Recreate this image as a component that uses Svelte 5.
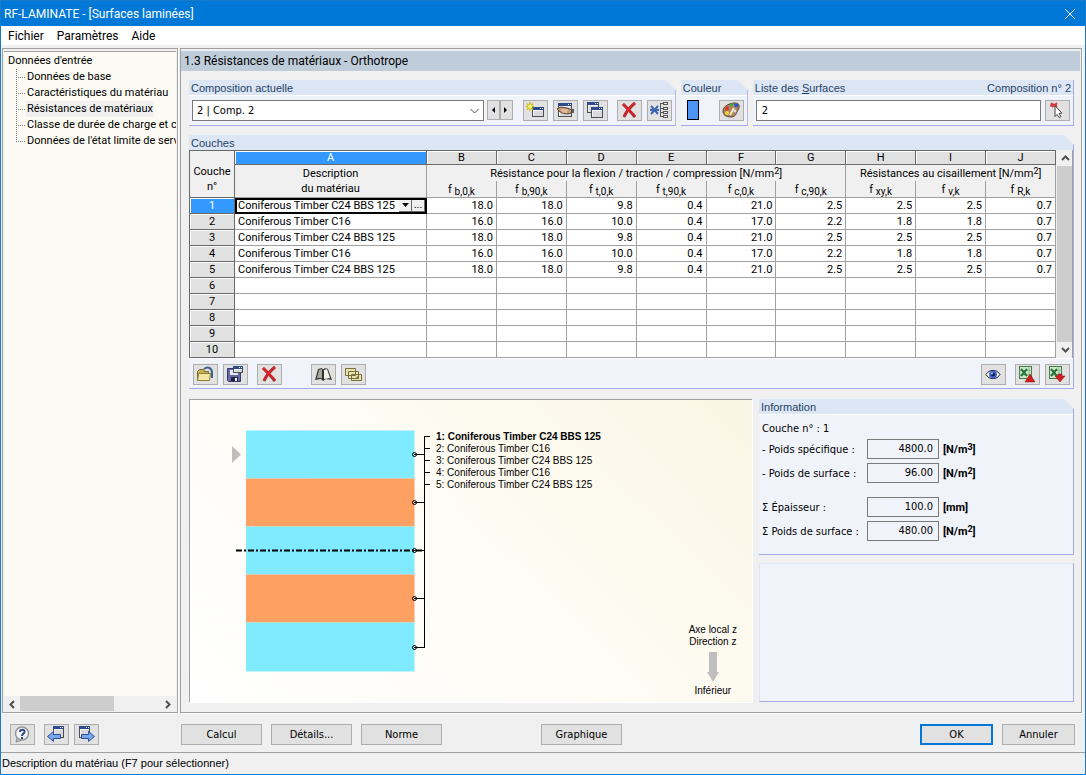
<script>
  const tree = [
    "Données de base",
    "Caractéristiques du matériau",
    "Résistances de matériaux",
    "Classe de durée de charge et c",
    "Données de l'état limite de serv",
  ];
  let current = $state(2);

  const letters = ["A", "B", "C", "D", "E", "F", "G", "H", "I", "J"];
  const symbols = ["b,0,k", "b,90,k", "t,0,k", "t,90,k", "c,0,k", "c,90,k", "xy,k", "v,k", "R,k"];

  const c24 = ["18.0", "18.0", "9.8", "0.4", "21.0", "2.5", "2.5", "2.5", "0.7"];
  const c16 = ["16.0", "16.0", "10.0", "0.4", "17.0", "2.2", "1.8", "1.8", "0.7"];
  const layers = [
    { name: "Coniferous Timber C24 BBS 125", values: c24, color: "#80eaff" },
    { name: "Coniferous Timber C16", values: c16, color: "#ffa063" },
    { name: "Coniferous Timber C24 BBS 125", values: c24, color: "#80eaff" },
    { name: "Coniferous Timber C16", values: c16, color: "#ffa063" },
    { name: "Coniferous Timber C24 BBS 125", values: c24, color: "#80eaff" },
  ];
  const rows = Array.from({ length: 10 }, (_, i) => layers[i]);

  const info = [
    { id: "density", label: "- Poids spécifique :", value: "4800.0", unit: "N/m", power: "3" },
    { id: "weight", label: "- Poids de surface :", value: "96.00", unit: "N/m", power: "2" },
    { id: "thickness", label: "Σ Épaisseur :", value: "100.0", unit: "mm", gap: true },
    { id: "total", label: "Σ Poids de surface :", value: "480.00", unit: "N/m", power: "2" },
  ];
</script>

{#snippet cross()}
  <path d="M3 2c2 2 8 8 12 13M15 1C10 5 6 10 4 15" fill="none" stroke="#8d2f32" stroke-width="3" />
  <path d="M3 2c2 2 8 8 12 12M15 1C10 5 6 10 4 14" fill="none" stroke="#e02028" stroke-width="2" />
{/snippet}

{#snippet win(x, y, w, h)}
  <rect x={x + 0.5} y={y + 0.5} width={w} height={h} fill="#d9d9dc" stroke="#4b4e55" />
  <path d="M{x + 1.5} {y + h - 0.5}v{4 - h}h{w - 2}" fill="none" stroke="#f4f4f4" />
  <rect {x} {y} width={w + 1} height="3" fill="#2c4a8c" />
  <path d="M{x + w - 3} {y + 1.5}h1m1 0h1" stroke="#fff" />
{/snippet}

{#snippet sheet()}
  <rect x="1.5" y="0.5" width="12" height="12" fill="#d3e6cf" stroke="#3f7a48" />
  <path d="M1.5 4.5h12M1.5 9h12M11 .5v12" stroke="#8dbb8f" fill="none" />
  <path d="M3 3l6 7M9 3l-6 7" stroke="#237538" stroke-width="2" />
{/snippet}

{#snippet tool(name, label)}
  <button class="tool" aria-label={label} title={label}>
    <svg width="19" height="17" viewBox="0 0 19 17" aria-hidden="true">
      {#if name === "new"}
        {@render win(6, 5, 11, 9)}
        <path d="M4 0v9M0 4.5h8M1 1.5l6 6M7 1.5l-6 6" stroke="#c9b900" stroke-width="1.3" />
        <circle cx="4" cy="4.5" r="2" fill="#fffb8a" />
      {:else if name === "edit"}
        {@render win(2, 1, 13, 13)}
        <path d="M1 7l4-2 6 1 5 2v3l-5 1-5-1-3-2z" fill="#c79a77" stroke="#5c4335" />
        <path d="M5 8h7M6 10h5" stroke="#f1d3b8" />
        <path d="M15 7h3v4h-3z" fill="#555" />
      {:else if name === "copy"}
        {@render win(1, 0, 11, 10)}
        {@render win(5, 5, 11, 10)}
      {:else if name === "delete"}
        {@render cross()}
      {:else if name === "clean"}
        <path d="M1 4l7 8M8 4l-7 8M0 8h9" stroke="#3b67b5" stroke-width="2" />
        <path d="M10.5 1v14M10 1.5h3M10 6.5h3M10 10.5h3M10 14.5h3" stroke="#555" fill="none" />
        <path d="M13 1.5h5M13 6.5h5M13 10.5h5M13 14.5h5" stroke="#555" stroke-width="3" />
        <path d="M14 1.5h3M14 6.5h3M14 10.5h3M14 14.5h3" stroke="#eee" />
      {:else if name === "palette"}
        <path d="M1 9C1 4 8 1 13 1s5 4 3 7-2 7-7 7-8-2-8-6z" fill="#a98561" stroke="#5a4331" />
        <path d="M3 6l3-2 1 3-3 2z" fill="#e52a21" />
        <path d="M8 2l3-1v3H8z" fill="#34af3c" />
        <path d="M12 2h4v3h-3z" fill="#2653d8" />
        <circle cx="5" cy="11" r="2" fill="#f2d42f" />
        <path d="M12 6l-4 7" stroke="#f4e8c6" stroke-width="2" />
        <circle cx="13" cy="9" r="1.5" fill="#e0e0e0" />
      {:else if name === "pick"}
        <path d="M3 1l6 4M9 1L4 5M2 3.5h7" stroke="#d63b3b" stroke-width="2" />
        <path d="M7 4l7 7-3 .5 2 3-2 1-2-3-2 2z" fill="#fff" stroke="#444" />
      {:else if name === "open"}
        <path d="M8 3c4-3 8-1 8 4v5" fill="none" stroke="#3e618e" stroke-width="2" />
        <path d="M1.5 14.5V5.5l2-2h4l1 2h4v9z" fill="#c7b253" stroke="#786a2a" />
        <path d="M1.5 14.5l1-7h12l-1 7z" fill="#f2e6a2" stroke="#8b7c36" />
      {:else if name === "save"}
        <path d="M1.5 2.5h13v13h-12l-1-1z" fill="#6469a6" stroke="#34386e" />
        <path d="M4 4h8v5H4z" fill="#e8e8f4" />
        <path d="M5 11h7v4H5z" fill="#20243e" />
        <path d="M9 12h2v3H9z" fill="#fff" />
        {@render win(7, 0, 9, 6)}
      {:else if name === "library"}
        <path d="M1 14L4 3l4-1 1 2 2-2 3 1 4 11-6-1-3 2-2-2z" fill="#3c3c3c" />
        <path d="M3 12l2-8 3-1 0 9z" fill="#a8a8a0" />
        <path d="M10 13V4l3-1 3 9z" fill="#f5f5ec" />
        <path d="M9 3v11" stroke="#222" />
      {:else if name === "layers"}
        <path d="M1.5 2.5h10v7h-10zM4.5 5.5h10v7h-10zM7.5 8.5h10v6h-10z" fill="#ece2ad" stroke="#77703f" />
        <path d="M12 12l1.5-2 1.5 2z" fill="#77703f" />
      {:else if name === "eye"}
        <path d="M2 8.5C5 3 13 3 16 8.5 13 14 5 14 2 8.5z" fill="#fff" stroke="#222" />
        <circle cx="9" cy="8.5" r="4" fill="#4069d0" />
        <circle cx="9" cy="8.5" r="2" fill="#111d55" />
        <circle cx="8" cy="7.5" r="1" fill="#bcd0ff" />
      {:else if name === "export"}
        {@render sheet()}
        <path d="M7 16l5-8 5 8z" fill="#d31e20" stroke="#7c1517" stroke-width=".5" />
      {:else if name === "import"}
        {@render sheet()}
        <path d="M7 10h3V8h4v2h3l-5 6z" fill="#d31e20" stroke="#7c1517" stroke-width=".5" />
      {:else if name === "help"}
        <path d="M4 12l-1 4 6-2" fill="#ccc" stroke="#888" />
        <circle cx="9" cy="7.5" r="6.5" fill="#f4f4f4" stroke="#999" stroke-width="1.5" />
        <path d="M7 6c0-3 5-3 4.5 0C11 8 9 7.5 9 10M9 11v2" fill="none" stroke="#2d4a86" stroke-width="2" />
      {:else if name === "previous"}
        {@render win(6, 0, 10, 11)}
        <path d="M.5 10.5l6-5v3h7v4h-7v3z" fill="#7ba5ea" stroke="#2c519c" />
      {:else if name === "next"}
        {@render win(2, 0, 10, 11)}
        <path d="M17.5 10.5l-6-5v3h-7v4h7v3z" fill="#7ba5ea" stroke="#2c519c" />
      {/if}
    </svg>
  </button>
{/snippet}

<div class="window">
  <header class="title">
    <h1>RF-LAMINATE - [Surfaces laminées]</h1>
    <button class="close" aria-label="Fermer">
      <svg width="10" height="10" viewBox="0 0 10 10"><path d="M0 0l10 10M10 0L0 10" stroke="#fff" /></svg>
    </button>
  </header>

  <nav class="menu">
    <button>Fichier</button>
    <button>Paramètres</button>
    <button>Aide</button>
  </nav>

  <div class="body">
    <aside>
      <div class="tree">
        <div class="root">Données d'entrée</div>
        <ul>
          {#each tree as item, i}
            <li>
              <svg width="11" height="16" viewBox="0 0 11 16" aria-hidden="true">
                <path d="M1.5 0v{i === tree.length - 1 ? 8 : 16}M1 8.5h9" stroke="#777" stroke-dasharray="1 1" />
              </svg>
              <button class:current={i === current} onclick={() => (current = i)}>{item}</button>
            </li>
          {/each}
        </ul>
      </div>
      <div class="hscroll">
        <button aria-label="Défiler à gauche">
          <svg width="6" height="9" viewBox="0 0 6 9"><path d="M5 1L1.5 4.5 5 8" /></svg>
        </button>
        <div class="track"><div class="thumb"></div></div>
        <button aria-label="Défiler à droite">
          <svg width="6" height="9" viewBox="0 0 6 9"><path d="M1 1l3.5 3.5L1 8" /></svg>
        </button>
      </div>
    </aside>

    <main>
      <h2>1.3 Résistances de matériaux - Orthotrope</h2>

      <div class="content">
        <div class="top">
          <section class="group cut composition">
            <h3><label for="composition">Composition actuelle</label></h3>
            <div class="bar">
              <div class="combo">
                <select id="composition">
                  <option>2 | Comp. 2</option>
                </select>
              </div>
              <div class="spin">
                <button aria-label="Précédent"><svg width="4" height="6"><path d="M4 0v6L1 3z" /></svg></button>
                <button aria-label="Suivant"><svg width="4" height="6"><path d="M0 0v6l3-3z" /></svg></button>
              </div>
              <div class="tools">
                {@render tool("new", "Nouvelle composition")}
                {@render tool("edit", "Renommer")}
                {@render tool("copy", "Copier")}
              </div>
              <div class="tools">
                {@render tool("delete", "Supprimer")}
                {@render tool("clean", "Supprimer les inutilisées")}
              </div>
            </div>
          </section>

          <section class="group cut color">
            <h3>Couleur</h3>
            <div class="bar spread">
              <span class="swatch"></span>
              {@render tool("palette", "Modifier la couleur")}
            </div>
          </section>

          <section class="group surfaces">
            <h3>
              <label for="surfaces">Liste des <u>S</u>urfaces</label>
              <span>Composition n° 2</span>
            </h3>
            <div class="bar">
              <input id="surfaces" value="2" />
              {@render tool("pick", "Sélectionner")}
            </div>
          </section>
        </div>

        <section class="group cut">
          <h3>Couches</h3>
          <div class="grid">
            <table>
              <colgroup>
                <col class="number" />
                <col class="name" />
                {#each symbols as symbol}
                  <col />
                {/each}
              </colgroup>
              <thead>
                <tr>
                  <th rowspan="3" class="corner">Couche<br />n°</th>
                  {#each letters as letter, i}
                    <th class="letter" class:active={i === 0}>{letter}</th>
                  {/each}
                </tr>
                <tr>
                  <th rowspan="2" class="description">Description<br />du matériau</th>
                  <th colspan="6" class="span">Résistance pour la flexion / traction / compression [N/mm<sup>2</sup>]</th>
                  <th colspan="3" class="span">Résistances au cisaillement [N/mm<sup>2</sup>]</th>
                </tr>
                <tr>
                  {#each symbols as symbol}
                    <th class="symbol">f <sub>{symbol}</sub></th>
                  {/each}
                </tr>
              </thead>
              <tbody>
                {#each rows as row, i}
                  <tr>
                    <th class="letter" class:active={i === 0}>{i + 1}</th>
                    {#if i === 0}
                      <td class="focus">
                        <div>
                          <span>{row.name}</span>
                          <button aria-label="Liste"><svg width="7" height="4"><path d="M0 0h7L3.5 4z" /></svg></button>
                          <button aria-label="Bibliothèque">...</button>
                        </div>
                      </td>
                    {:else}
                      <td>{row?.name ?? ""}</td>
                    {/if}
                    {#each symbols as symbol, j}
                      <td class="num">{row?.values[j] ?? ""}</td>
                    {/each}
                  </tr>
                {/each}
              </tbody>
            </table>
            <div class="vscroll">
              <button aria-label="Défiler vers le haut">
                <svg width="9" height="6" viewBox="0 0 9 6"><path d="M1 5l3.5-3.5L8 5" /></svg>
              </button>
              <div class="track"></div>
              <button aria-label="Défiler vers le bas">
                <svg width="9" height="6" viewBox="0 0 9 6"><path d="M1 1l3.5 3.5L8 1" /></svg>
              </button>
            </div>
          </div>
          <div class="bar table-bar">
            <div class="tools">
              {@render tool("open", "Ouvrir")}
              {@render tool("save", "Enregistrer")}
            </div>
            <div class="tools">{@render tool("delete", "Tout supprimer")}</div>
            <div class="tools wide">
              {@render tool("library", "Bibliothèque de matériaux")}
              {@render tool("layers", "Bibliothèque de couches")}
            </div>
            <div class="tools end">{@render tool("eye", "Afficher")}</div>
            <div class="tools">
              {@render tool("export", "Exporter")}
              {@render tool("import", "Importer")}
            </div>
          </div>
        </section>

        <div class="bottom">
          <div class="graphic">
            <svg class="stack" width="440" height="280" viewBox="0 0 440 280">
              {#each layers as layer, i}
                <rect x="56" y={30.5 + i * 48} width="168.5" height={i === 4 ? 49 : 48} fill={layer.color} />
              {/each}
              <path d="M42 46v17l9-8.5z" fill="#bfbfbf" />
              <path d="M46 150.5h188" stroke="#000" stroke-width="2" stroke-dasharray="6 2 2 2" />
              <g fill="none" stroke="#000">
                <path d="M234.5 36v212" />
                {#each layers as layer, i}
                  {@const y = 54.5 + i * 48 + (i === 4 ? 1 : 0)}
                  <circle cx="224.5" cy={y} r="2" />
                  <path d="M224 {y}h10M234 {36.5 + i * 12}h6" />
                {/each}
              </g>
              {#each layers as layer, i}
                <text x="246" y={40 + i * 12} class:strong={i === 0}>{i + 1}: {layer.name}</text>
              {/each}
            </svg>
            <div class="axis">
              <span>Axe local z</span>
              <span>Direction z</span>
              <svg width="12" height="30" viewBox="0 0 12 30"><path d="M2 0h8v20h2l-6 10-6-10h2z" fill="#bfbfbf" /></svg>
              <span>Inférieur</span>
            </div>
          </div>

          <div class="side">
            <section class="group cut">
              <h3>Information</h3>
              <div class="info">
                <p>Couche n° : 1</p>
                {#each info as field}
                  <div class="field" class:gap={field.gap}>
                    <label for={field.id}>{field.label}</label>
                    <input id={field.id} value={field.value} readonly />
                    <b>[{field.unit}{#if field.power}<sup>{field.power}</sup>{/if}]</b>
                  </div>
                {/each}
              </div>
            </section>
            <div class="group blank"></div>
          </div>
        </div>
      </div>
    </main>
  </div>

  <footer>
    <div class="nav">
      {@render tool("help", "Aide")}
      <div class="tools">
        {@render tool("previous", "Précédent")}
        {@render tool("next", "Suivant")}
      </div>
    </div>
    <div class="actions">
      <button class="push">Calcul</button>
      <button class="push">Détails...</button>
      <button class="push">Norme</button>
      <button class="push graph">Graphique</button>
    </div>
    <div class="confirm">
      <button class="push default">OK</button>
      <button class="push">Annuler</button>
    </div>
  </footer>

  <div class="status">Description du matériau (F7 pour sélectionner)</div>
</div>

<style>
  :global(body) {
    margin: 0;
  }

  .window {
    --ui: "DejaVu Sans Condensed", "Noto Sans", sans-serif;
    --grid: Roboto, "Liberation Sans", sans-serif;
    --small: "Liberation Sans", Arial, sans-serif;
    --line: #a0a0a0;
    display: flex;
    flex-direction: column;
    box-sizing: border-box;
    min-height: 100vh;
    border: 1px solid #1979ca;
    background: #f0f0f0;
    color: #000;
    font: 11px/16px var(--ui);
  }

  .window * {
    box-sizing: border-box;
  }

  h1,
  h2,
  h3,
  p,
  ul {
    margin: 0;
    padding: 0;
    font-weight: normal;
  }

  button,
  input,
  select {
    margin: 0;
    padding: 0;
    border: 0;
    border-radius: 0;
    background: none;
    color: inherit;
    font: inherit;
  }

  svg {
    display: block;
    flex: none;
  }

  .title {
    display: flex;
    align-items: center;
    justify-content: space-between;
    height: 25px;
    padding: 0 10px 0 3px;
    background: #0078d7;
    color: #fff;
  }

  h1,
  .menu {
    font: 12px/18px var(--grid);
  }

  .menu {
    display: flex;
    gap: 13px;
    height: 19px;
    padding: 0 7px;
    background: #fff;
  }

  .body {
    display: flex;
    flex: 1;
    gap: 2px;
    padding: 3px 3px 0 1px;
  }

  aside,
  main {
    border: 1px solid var(--line);
    box-shadow: 1px 1px #fff;
  }

  aside {
    display: flex;
    flex-direction: column;
    width: 176px;
    padding: 2px 1px 1px;
    overflow: hidden;
  }

  .tree {
    flex: 1;
    padding: 1px 0 0 4px;
    border-top: 1px solid var(--line);
    background: #fcfbf3;
    font-family: var(--grid);
    white-space: nowrap;
    overflow: hidden;
  }

  ul {
    padding-left: 7px;
    list-style: none;
  }

  li {
    display: flex;
  }

  li button {
    padding: 0 1px;
  }

  li .current {
    background: #f0f0f0;
  }

  .hscroll {
    display: flex;
    height: 15px;
  }

  .hscroll button,
  .vscroll button {
    display: grid;
    place-items: center;
    width: 16px;
    height: 16px;
  }

  .hscroll path,
  .vscroll path {
    fill: none;
    stroke: #505050;
    stroke-width: 2;
  }

  .track {
    flex: 1;
  }

  .thumb {
    width: 67%;
    height: 15px;
    background: #cdcdcd;
  }

  main {
    display: flex;
    flex: 1;
    flex-direction: column;
    min-width: 0;
    padding: 2px 1px 1px 0;
  }

  h2 {
    height: 20px;
    padding: 0 3px;
    background: #bfcddb;
    font: 12px/20px var(--grid);
  }

  .content {
    display: flex;
    flex: 1;
    flex-direction: column;
    gap: 9px;
    padding: 9px 6px 9px 8px;
  }

  .top,
  .bottom {
    display: flex;
  }

  .top {
    gap: 5px;
  }

  .bottom {
    flex: 1;
    gap: 7px;
    padding-top: 1px;
  }

  .group {
    border: solid #a9a9e6;
    border-width: 0 1px 1px 0;
    background: #f0f3fa;
  }

  .cut {
    clip-path: polygon(0 0, calc(100% - 10px) 0, 100% 10px, 100% 100%, 0 100%);
  }

  h3 {
    display: flex;
    justify-content: space-between;
    height: 15px;
    padding: 0 2px;
    background: #dce6f4;
    color: #1f4367;
    font: 11px/16px var(--small);
  }

  .composition {
    flex: 487;
  }

  .color {
    width: 67px;
  }

  .surfaces {
    flex: 321;
  }

  .bar {
    display: flex;
    height: 30px;
    padding: 4px 3px;
    border-top: 1px solid #fff;
  }

  .spread {
    justify-content: space-between;
    padding-left: 6px;
  }

  .combo {
    display: grid;
    flex: 1;
    height: 21px;
  }

  select,
  .bar input {
    height: 21px;
    padding: 0 4px;
    border: 1px solid #7a7a7a;
    background: #fff;
  }

  select {
    appearance: none;
    background: #fff url("data:image/svg+xml,%3Csvg xmlns='http://www.w3.org/2000/svg' width='9' height='6'%3E%3Cpath d='M.5 1l4 4 4-4' fill='none' stroke='%23555'/%3E%3C/svg%3E") no-repeat right 4px center;
  }

  .bar input {
    flex: 1;
    min-width: 0;
    padding-left: 5px;
    margin-right: 4px;
  }

  .spin {
    display: flex;
    margin: 0 10px 0 3px;
  }

  .spin button,
  .tool {
    display: grid;
    place-items: center;
    border: 1px solid #adadad;
    background: #e1e1e1;
  }

  .spin button {
    width: 13px;
    height: 20px;
  }

  .tools {
    display: flex;
    gap: 5px;
  }

  .tools + .tools {
    margin-left: 9px;
  }

  .tool {
    width: 25px;
    height: 21px;
  }

  .swatch {
    width: 12px;
    height: 20px;
    border: 1px solid #000;
    background: #4d94f5;
  }

  .grid {
    display: flex;
  }

  table {
    flex: 1;
    width: 100%;
    min-width: 0;
    table-layout: fixed;
    border-collapse: separate;
    border-spacing: 0;
    border: solid #696969;
    border-width: 1px 0 0 1px;
    font: 11px/15px var(--grid);
  }

  .number {
    width: 45px;
  }

  .name {
    width: 192px;
  }

  th,
  td {
    height: 16px;
    padding: 0 3px;
    border: solid var(--line);
    border-width: 0 1px 1px 0;
    background: #fff;
    font-weight: normal;
    white-space: nowrap;
    overflow: hidden;
  }

  th {
    padding: 0;
    background: #f0f0f0;
    text-align: center;
  }

  .letter {
    padding: 0;
    border-color: #696969;
    background: #e1e1e1;
    box-shadow: inset 1px 1px #fff;
    line-height: 13px;
  }

  thead .letter {
    height: 14px;
    line-height: 12px;
  }

  .active {
    background: #3399ff;
    color: #fff;
  }

  .corner {
    padding-top: 10px;
    border-color: #696969;
  }

  .symbol {
    height: 17px;
  }

  .span {
    border-bottom: 0;
  }

  sup,
  sub {
    font-size: 10px;
    line-height: 0;
  }

  sup {
    font-size: 9px;
    vertical-align: 3px;
  }

  sub {
    vertical-align: -2px;
  }

  .num {
    text-align: right;
  }

  .focus {
    padding: 0;
    outline: 2px solid #000;
    outline-offset: -2px;
  }

  .focus div {
    display: flex;
    height: 15px;
    padding: 1px 1px 1px 3px;
    line-height: 13px;
  }

  .focus span {
    flex: 1;
  }

  .focus button {
    display: grid;
    place-items: center;
    width: 13px;
    border-right: 1px solid #696969;
    border-bottom: 1px solid #696969;
    background: #f0f0f0;
    line-height: 8px;
  }

  .vscroll {
    display: flex;
    flex: none;
    flex-direction: column;
    width: 17px;
    padding-left: 1px;
    border-right: 1px solid var(--line);
    background: #f0f0f0;
  }

  .vscroll .track {
    background: #cdcdcd;
  }

  .table-bar {
    padding: 5px 3px 3px 4px;
  }

  .tools + .wide {
    margin-left: 29px;
  }

  .tools + .end {
    margin-left: auto;
  }

  .graphic {
    display: flex;
    flex: 1;
    justify-content: space-between;
    border: solid var(--line);
    border-width: 1px 0 0 1px;
    background: linear-gradient(45deg, #fff, #fefcf5 50%, #faf5e4);
    box-shadow: 1px 1px #fff;
  }

  .stack {
    font: 10px var(--small);
  }

  .strong {
    font-weight: bold;
  }

  .axis {
    display: flex;
    flex-direction: column;
    align-items: center;
    align-self: flex-end;
    padding: 0 15px 5px;
    font: 10px/12px var(--small);
  }

  .axis svg {
    margin: 4px 0 3px;
  }

  .side {
    display: flex;
    flex-direction: column;
    gap: 8px;
    width: 315px;
  }

  .info {
    padding: 4px 3px 13px;
    border-top: 1px solid #fff;
  }

  .info p {
    height: 16px;
    line-height: 20px;
  }

  .field {
    display: grid;
    grid-template-columns: 105px 72px 1fr;
    grid-template-rows: 20px;
    margin-top: 4px;
    line-height: 22px;
  }

  .gap {
    margin-top: 14px;
  }

  .field input {
    height: 20px;
    padding: 0 5px;
    border: 1px solid #7a7a7a;
    text-align: right;
  }

  .field b {
    padding-left: 4px;
    font-family: var(--grid);
  }

  .blank {
    flex: 1;
    border-left: 1px solid #dce6f4;
    border-top: 1px solid #dce6f4;
  }

  footer {
    display: flex;
    padding: 11px 10px 7px 9px;
  }

  .nav {
    display: flex;
    gap: 9px;
    width: 171px;
  }

  .actions,
  .confirm {
    display: flex;
    gap: 9px;
  }

  .actions {
    flex: 1;
  }

  .push {
    width: 81px;
    height: 21px;
    border: 1px solid #adadad;
    background: #e1e1e1;
  }

  .graph {
    margin-left: 90px;
  }

  .confirm .push {
    width: 73px;
  }

  .confirm .default {
    border: 2px solid #0078d7;
  }

  .status {
    height: 22px;
    border-top: 1px solid var(--line);
    padding-left: 1px;
    font: 11px/20px var(--small);
  }
</style>
